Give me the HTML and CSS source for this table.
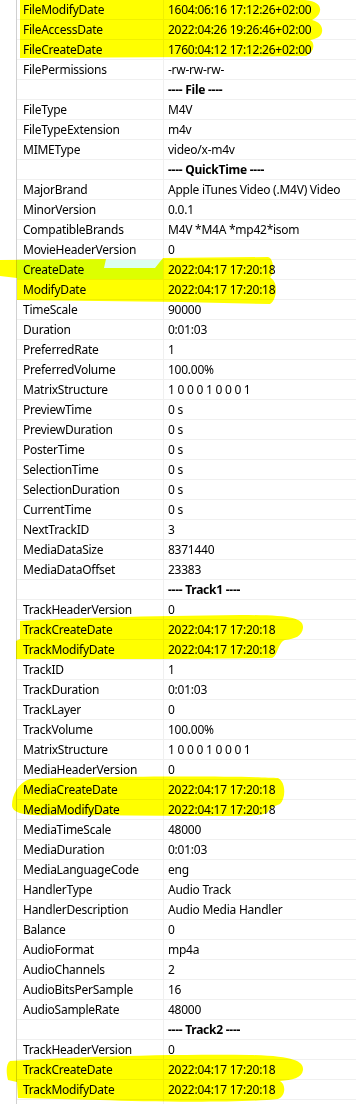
FILE: index.html
```html
<!DOCTYPE html>
<html>
<head>
<meta charset="utf-8">
<link rel="stylesheet" href="styles.css">
</head>
<body>
<div class="page">
  <div class="grid">
    <div class="row"><div class="k">FileModifyDate</div><div class="v">1604:06:16 17:12:26+02:00</div></div>
    <div class="row"><div class="k">FileAccessDate</div><div class="v">2022:04:26 19:26:46+02:00</div></div>
    <div class="row"><div class="k">FileCreateDate</div><div class="v">1760:04:12 17:12:26+02:00</div></div>
    <div class="row"><div class="k">FilePermissions</div><div class="v">-rw-rw-rw-</div></div>
    <div class="row"><div class="k"></div><div class="v sec">---- File ----</div></div>
    <div class="row"><div class="k">FileType</div><div class="v">M4V</div></div>
    <div class="row"><div class="k">FileTypeExtension</div><div class="v">m4v</div></div>
    <div class="row"><div class="k">MIMEType</div><div class="v">video/x-m4v</div></div>
    <div class="row"><div class="k"></div><div class="v sec">---- QuickTime ----</div></div>
    <div class="row"><div class="k">MajorBrand</div><div class="v">Apple iTunes Video (.M4V) Video</div></div>
    <div class="row"><div class="k">MinorVersion</div><div class="v">0.0.1</div></div>
    <div class="row"><div class="k">CompatibleBrands</div><div class="v">M4V *M4A *mp42*isom</div></div>
    <div class="row"><div class="k">MovieHeaderVersion</div><div class="v">0</div></div>
    <div class="row"><div class="k hover">CreateDate</div><div class="v">2022:04:17 17:20:18</div></div>
    <div class="row"><div class="k">ModifyDate</div><div class="v">2022:04:17 17:20:18</div></div>
    <div class="row"><div class="k">TimeScale</div><div class="v">90000</div></div>
    <div class="row"><div class="k">Duration</div><div class="v">0:01:03</div></div>
    <div class="row"><div class="k">PreferredRate</div><div class="v">1</div></div>
    <div class="row"><div class="k">PreferredVolume</div><div class="v">100.00%</div></div>
    <div class="row"><div class="k">MatrixStructure</div><div class="v">1 0 0 0 1 0 0 0 1</div></div>
    <div class="row"><div class="k">PreviewTime</div><div class="v">0 s</div></div>
    <div class="row"><div class="k">PreviewDuration</div><div class="v">0 s</div></div>
    <div class="row"><div class="k">PosterTime</div><div class="v">0 s</div></div>
    <div class="row"><div class="k">SelectionTime</div><div class="v">0 s</div></div>
    <div class="row"><div class="k">SelectionDuration</div><div class="v">0 s</div></div>
    <div class="row"><div class="k">CurrentTime</div><div class="v">0 s</div></div>
    <div class="row"><div class="k">NextTrackID</div><div class="v">3</div></div>
    <div class="row"><div class="k">MediaDataSize</div><div class="v">8371440</div></div>
    <div class="row"><div class="k">MediaDataOffset</div><div class="v">23383</div></div>
    <div class="row"><div class="k"></div><div class="v sec">---- Track1 ----</div></div>
    <div class="row"><div class="k">TrackHeaderVersion</div><div class="v">0</div></div>
    <div class="row"><div class="k">TrackCreateDate</div><div class="v">2022:04:17 17:20:18</div></div>
    <div class="row"><div class="k">TrackModifyDate</div><div class="v">2022:04:17 17:20:18</div></div>
    <div class="row"><div class="k">TrackID</div><div class="v">1</div></div>
    <div class="row"><div class="k">TrackDuration</div><div class="v">0:01:03</div></div>
    <div class="row"><div class="k">TrackLayer</div><div class="v">0</div></div>
    <div class="row"><div class="k">TrackVolume</div><div class="v">100.00%</div></div>
    <div class="row"><div class="k">MatrixStructure</div><div class="v">1 0 0 0 1 0 0 0 1</div></div>
    <div class="row"><div class="k">MediaHeaderVersion</div><div class="v">0</div></div>
    <div class="row"><div class="k">MediaCreateDate</div><div class="v">2022:04:17 17:20:18</div></div>
    <div class="row"><div class="k">MediaModifyDate</div><div class="v">2022:04:17 17:20:18</div></div>
    <div class="row"><div class="k">MediaTimeScale</div><div class="v">48000</div></div>
    <div class="row"><div class="k">MediaDuration</div><div class="v">0:01:03</div></div>
    <div class="row"><div class="k">MediaLanguageCode</div><div class="v">eng</div></div>
    <div class="row"><div class="k">HandlerType</div><div class="v">Audio Track</div></div>
    <div class="row"><div class="k">HandlerDescription</div><div class="v">Audio Media Handler</div></div>
    <div class="row"><div class="k">Balance</div><div class="v">0</div></div>
    <div class="row"><div class="k">AudioFormat</div><div class="v">mp4a</div></div>
    <div class="row"><div class="k">AudioChannels</div><div class="v">2</div></div>
    <div class="row"><div class="k">AudioBitsPerSample</div><div class="v">16</div></div>
    <div class="row"><div class="k">AudioSampleRate</div><div class="v">48000</div></div>
    <div class="row"><div class="k"></div><div class="v sec">---- Track2 ----</div></div>
    <div class="row"><div class="k">TrackHeaderVersion</div><div class="v">0</div></div>
    <div class="row"><div class="k">TrackCreateDate</div><div class="v">2022:04:17 17:20:18</div></div>
    <div class="row"><div class="k">TrackModifyDate</div><div class="v">2022:04:17 17:20:18</div></div>
    <div class="row"><div class="k"></div><div class="v"></div></div>
  </div>
  <svg class="marker" width="356" height="1104" viewBox="0 0 356 1104" xmlns="http://www.w3.org/2000/svg">
    <path d="M20,0 H305 C317,1 321,6 320,11 C319,16 314,19 312,20 C320,22 323,27 322,32 C321,37 316,39 310,40 C315,42 315,52 306,56 L200,57 L20,58 Z"/>
    <path d="M0,260 L106,259 L104,268 L155,268 L163,258 L268,257 C274,258 275,275 270,277 L272,279 C278,283 277,300 270,304 L180,302 L17,300 L17,278 L0,276 Z"/>
    <path d="M20,621 C60,618 150,616 240,615 C290,615 304,618 303,628 C302,636 295,639 285,640 C278,642 278,656 272,658 L160,659 L16,659 L16,641 L20,639 Z"/>
    <path d="M30,779 C100,776 250,776 278,778 C286,782 286,798 280,804 C275,806 270,808 268,812 C262,817 240,816 200,816 L60,815 C30,816 12,815 12,805 C12,795 18,783 30,779 Z"/>
    <path d="M10,1061 C60,1058 150,1054 250,1055 C295,1056 304,1062 303,1070 C302,1078 292,1080 280,1081 C286,1084 286,1096 278,1099 C240,1103 150,1102 100,1100 L18,1098 L17,1082 L8,1080 C6,1072 6,1064 10,1061 Z"/>
  </svg>
</div>
</body>
</html>
```

FILE: styles.css
```css
html, body {
  margin: 0;
  padding: 0;
  background: #ffffff;
}

body {
  font-family: "Segoe UI", "Noto Sans", "Open Sans", sans-serif;
  font-size: 12px;
  letter-spacing: -0.25px;
  color: #000000;
}

.page {
  position: relative;
  width: 356px;
  height: 1104px;
  overflow: hidden;
}

.grid {
  margin-left: 16px;
  border-left: 1px solid #d0d0d0;
}

.row {
  display: grid;
  grid-template-columns: 147px 1fr;
  height: 20px;
  box-sizing: border-box;
  border-bottom: 1px solid #f0f0f0;
}

.k {
  box-sizing: border-box;
  padding-left: 6px;
  border-right: 1px solid #f0f0f0;
  line-height: 19px;
  white-space: nowrap;
  overflow: hidden;
}

.k.hover {
  background: #dcfff2;
}

.v {
  padding-left: 4px;
  line-height: 19px;
  white-space: nowrap;
  overflow: hidden;
}

.v.sec {
  font-weight: bold;
}

.marker {
  position: absolute;
  left: 0;
  top: 0;
  fill: #ffff00;
  mix-blend-mode: multiply;
  pointer-events: none;
}
```
